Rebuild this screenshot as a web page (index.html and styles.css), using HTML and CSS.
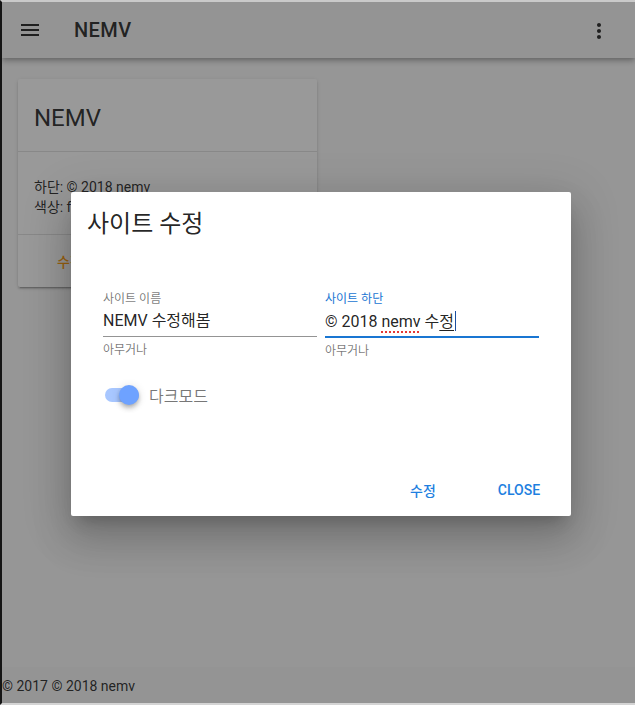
FILE: index.html
```html
<!DOCTYPE html>
<html lang="ko">
<head>
<meta charset="utf-8">
<title>NEMV</title>
<link rel="stylesheet" href="styles.css">
</head>
<body>
<div class="frame">
  <header class="toolbar">
    <svg class="icon menu" viewBox="0 0 24 24" width="24" height="24"><path d="M3 18h18v-2H3v2zm0-5h18v-2H3v2zm0-7v2h18V6H3z"/></svg>
    <div class="toolbar-title">NEMV</div>
    <div class="spacer"></div>
    <svg class="icon more" viewBox="0 0 24 24" width="24" height="24"><path d="M12 8c1.1 0 2-.9 2-2s-.9-2-2-2-2 .9-2 2 .9 2 2 2zm0 2c-1.1 0-2 .9-2 2s.9 2 2 2 2-.9 2-2-.9-2-2-2zm0 6c-1.1 0-2 .9-2 2s.9 2 2 2 2-.9 2-2-.9-2-2-2z"/></svg>
  </header>
  <main class="content">
    <div class="card">
      <div class="card-title">NEMV</div>
      <div class="card-text">
        <div>하단: © 2018 nemv</div>
        <div>색상: false</div>
      </div>
      <div class="card-actions">
        <span class="btn btn-orange">수정</span>
      </div>
    </div>
  </main>
  <footer class="footer">© 2017 © 2018 nemv</footer>
  <div class="overlay"></div>
  <div class="dialog-wrap">
    <div class="dialog">
      <div class="dialog-title">사이트 수정</div>
      <div class="fields">
        <div class="field">
          <div class="field-label">사이트 이름</div>
          <div class="field-input">NEMV 수정해봄</div>
          <div class="field-hint">아무거나</div>
        </div>
        <div class="field focused">
          <div class="field-label">사이트 하단</div>
          <div class="field-input">© 2018 <span class="spell">nemv</span> 수<span class="compose">정</span><span class="caret"></span></div>
          <div class="field-hint">아무거나</div>
        </div>
      </div>
      <div class="switch-row">
        <div class="switch">
          <div class="switch-track"></div>
          <div class="switch-thumb"></div>
        </div>
        <span class="switch-label">다크모드</span>
      </div>
      <div class="dialog-actions">
        <span class="btn btn-blue">수정</span>
        <span class="btn btn-blue">Close</span>
      </div>
    </div>
  </div>
</div>
</body>
</html>
```

FILE: styles.css
```css
* { box-sizing: border-box; }
html, body { margin: 0; padding: 0; }
body {
  font-family: Roboto, "Noto Sans CJK KR", sans-serif;
  color: rgba(0,0,0,.87);
  background: #fafafa;
}
.frame {
  position: relative;
  width: 635px;
  height: 705px;
  border-left: 2px solid #151515;
  border-top: 2px solid #cacaca;
  border-bottom: 2px solid #d4d4d4;
  display: flex;
  flex-direction: column;
  background: #fafafa;
  overflow: hidden;
}
.toolbar {
  height: 56px;
  flex: none;
  display: flex;
  align-items: center;
  background: #f5f5f5;
  padding: 0 24px 0 16px;
  box-shadow: 0 2px 4px -1px rgba(0,0,0,.2), 0 4px 5px 0 rgba(0,0,0,.14), 0 1px 10px 0 rgba(0,0,0,.12);
  position: relative;
  z-index: 1;
}
.icon { fill: rgba(0,0,0,.87); flex: none; display: block; }
.menu { margin-top: -1px; }
.more { margin-top: 1px; }
.toolbar-title {
  margin-left: 32px;
  font-size: 20px;
  font-weight: 500;
  letter-spacing: .02em;
}
.spacer { flex: 1; }
.content {
  flex: 1;
  padding: 21px 16px;
}
.card {
  width: 299px;
  background: #fff;
  border-radius: 2px;
  box-shadow: 0 3px 1px -2px rgba(0,0,0,.2), 0 2px 2px 0 rgba(0,0,0,.14), 0 1px 5px 0 rgba(0,0,0,.12);
}
.card-title {
  height: 73px;
  padding: 23px 16px 0;
  font-size: 24px;
  line-height: 32px;
  border-bottom: 1px solid rgba(0,0,0,.12);
}
.card-text {
  padding: 25px 16px 17px;
  font-size: 14px;
  line-height: 20px;
  border-bottom: 1px solid rgba(0,0,0,.12);
}
.card-actions {
  padding: 8px;
  height: 52px;
  display: flex;
  align-items: center;
}
.btn {
  min-width: 88px;
  height: 36px;
  padding: 0 16px;
  display: inline-flex;
  align-items: center;
  justify-content: center;
  font-size: 14px;
  font-weight: 500;
  text-transform: uppercase;
}
.btn-orange { color: #ff9800; }
.btn-blue { color: #1e7fe0; margin-left: 8px; }
.footer {
  height: 36px;
  flex: none;
  display: flex;
  align-items: center;
  background: #f5f5f5;
  font-size: 14px;
  padding-top: 2px;
}
.overlay {
  position: absolute;
  inset: 0;
  background: rgba(33,33,33,.46);
  z-index: 5;
}
.dialog-wrap {
  position: absolute;
  inset: 0;
  z-index: 6;
  display: flex;
  padding: 190px 0 0 69px;
}
.dialog {
  width: 500px;
  height: 324px;
  background: #fff;
  border-radius: 2px;
  display: flex;
  flex-direction: column;
  box-shadow: 0 11px 15px -7px rgba(0,0,0,.2), 0 24px 38px 3px rgba(0,0,0,.14), 0 9px 46px 8px rgba(0,0,0,.12);
}
.dialog-title {
  padding: 16px;
  font-size: 24px;
  line-height: 32px;
}
.fields {
  margin-top: 35px;
  padding: 0 32px;
  display: grid;
  grid-template-columns: 1fr 1fr;
  column-gap: 8px;
}
.field-label {
  font-size: 12px;
  line-height: 16px;
  color: rgba(0,0,0,.54);
}
.field-input {
  font-size: 16px;
  line-height: 20px;
  padding: 4px 0 5px;
  border-bottom: 1px solid rgba(0,0,0,.42);
  white-space: nowrap;
}
.focused .field-label { color: #1976d2; }
.focused .field-input {
  border-bottom: 2px solid #1976d2;
  padding-bottom: 4px;
}
.field-hint {
  margin-top: 5px;
  font-size: 12px;
  line-height: 16px;
  color: rgba(0,0,0,.54);
}
.spell {
  text-decoration: underline dotted #e53935;
  text-decoration-thickness: 2px;
  text-underline-offset: 4px;
}
.compose {
  text-decoration: underline;
  text-underline-offset: 3px;
}
.caret {
  display: inline-block;
  width: 1px;
  height: 20px;
  background: #1a4fa0;
  vertical-align: -4px;
  margin-left: 1px;
}
.switch-row {
  margin-top: 24px;
  padding-left: 34px;
  height: 24px;
  display: flex;
  align-items: center;
}
.switch {
  position: relative;
  width: 34px;
  height: 24px;
  flex: none;
}
.switch-track {
  position: absolute;
  left: 0;
  top: 5px;
  width: 34px;
  height: 14px;
  border-radius: 8px;
  background: #6ea2ff;
  opacity: .6;
}
.switch-thumb {
  position: absolute;
  left: 14px;
  top: 2px;
  width: 20px;
  height: 20px;
  border-radius: 50%;
  background: #6ea2ff;
  box-shadow: 0 2px 4px -1px rgba(0,0,0,.2), 0 4px 5px 0 rgba(0,0,0,.14), 0 1px 10px 0 rgba(0,0,0,.12);
}
.switch-label {
  margin-left: 10px;
  font-size: 16px;
  color: rgba(0,0,0,.54);
}
.dialog-actions {
  margin-top: auto;
  padding: 8px;
  display: flex;
  justify-content: flex-end;
}
```
